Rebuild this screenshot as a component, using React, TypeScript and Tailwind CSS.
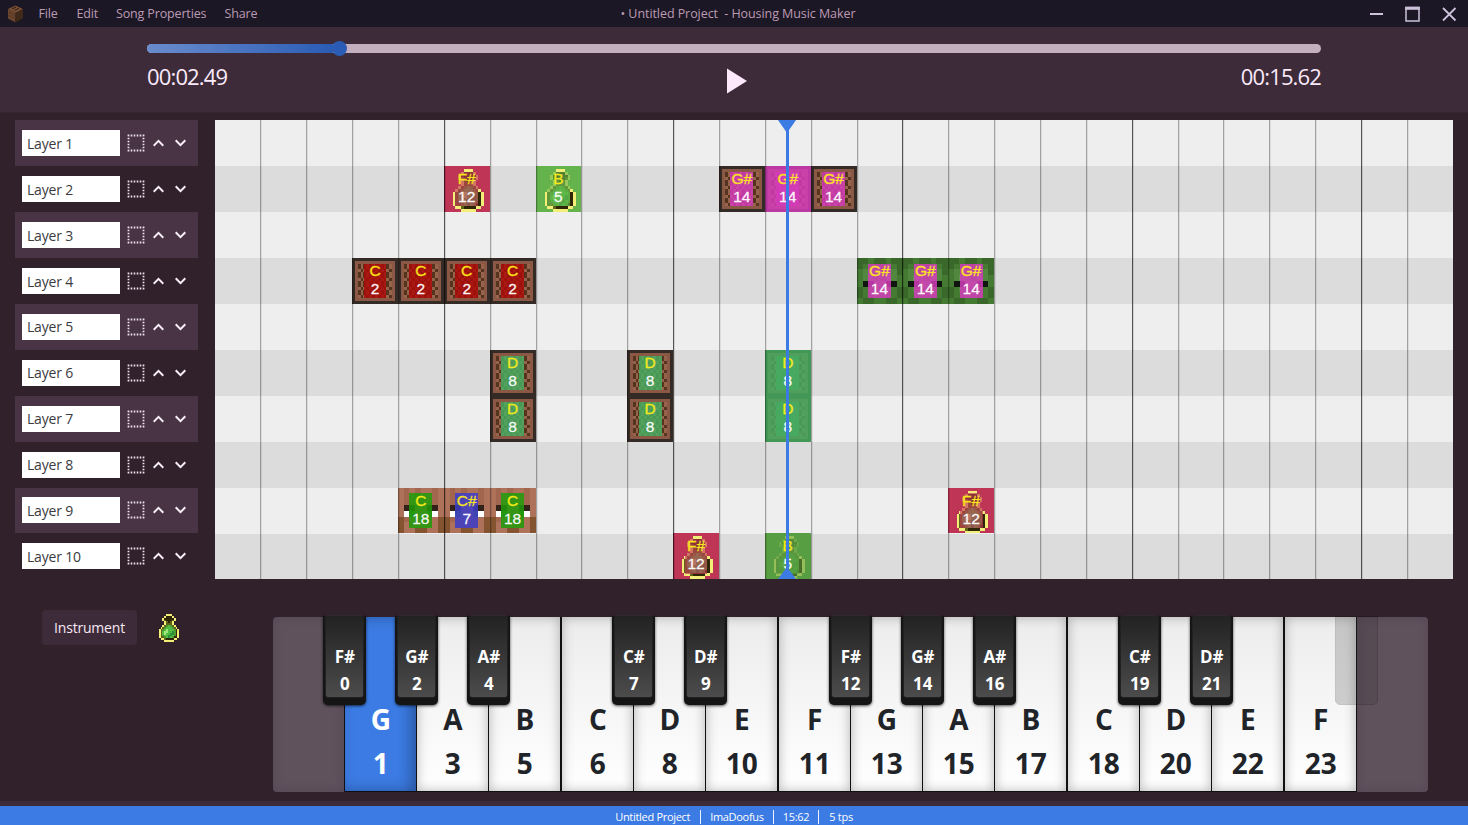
import React from 'react';

type Texture = 'noteblock' | 'zombie' | 'villager' | 'bottle';
type Note = { col: number; row: number; label: string; num: number; color: string; tex: Texture; playing?: boolean };

const NOTES: Note[] = [
  { col: 6, row: 2, label: 'F#', num: 12, color: '#bf3556', tex: 'bottle' },
  { col: 8, row: 2, label: 'B', num: 5, color: '#64b34c', tex: 'bottle' },
  { col: 12, row: 2, label: 'G#', num: 14, color: '#d43cba', tex: 'noteblock' },
  { col: 13, row: 2, label: 'G#', num: 14, color: '#d43cba', tex: 'noteblock', playing: true },
  { col: 14, row: 2, label: 'G#', num: 14, color: '#d43cba', tex: 'noteblock' },
  { col: 4, row: 4, label: 'C', num: 2, color: '#ac0a08', tex: 'noteblock' },
  { col: 5, row: 4, label: 'C', num: 2, color: '#ac0a08', tex: 'noteblock' },
  { col: 6, row: 4, label: 'C', num: 2, color: '#ac0a08', tex: 'noteblock' },
  { col: 7, row: 4, label: 'C', num: 2, color: '#ac0a08', tex: 'noteblock' },
  { col: 15, row: 4, label: 'G#', num: 14, color: '#d43cba', tex: 'zombie' },
  { col: 16, row: 4, label: 'G#', num: 14, color: '#d43cba', tex: 'zombie' },
  { col: 17, row: 4, label: 'G#', num: 14, color: '#d43cba', tex: 'zombie' },
  { col: 7, row: 6, label: 'D', num: 8, color: '#46ab60', tex: 'noteblock' },
  { col: 7, row: 7, label: 'D', num: 8, color: '#46ab60', tex: 'noteblock' },
  { col: 10, row: 6, label: 'D', num: 8, color: '#46ab60', tex: 'noteblock' },
  { col: 10, row: 7, label: 'D', num: 8, color: '#46ab60', tex: 'noteblock' },
  { col: 13, row: 6, label: 'D', num: 8, color: '#46ab60', tex: 'noteblock', playing: true },
  { col: 13, row: 7, label: 'D', num: 8, color: '#46ab60', tex: 'noteblock', playing: true },
  { col: 5, row: 9, label: 'C', num: 18, color: '#1e9c08', tex: 'villager' },
  { col: 6, row: 9, label: 'C#', num: 7, color: '#3c3cc8', tex: 'villager' },
  { col: 7, row: 9, label: 'C', num: 18, color: '#1e9c08', tex: 'villager' },
  { col: 17, row: 9, label: 'F#', num: 12, color: '#bf3556', tex: 'bottle' },
  { col: 11, row: 10, label: 'F#', num: 12, color: '#bf3556', tex: 'bottle' },
  { col: 13, row: 10, label: 'B', num: 5, color: '#579d42', tex: 'bottle', playing: true },
];

const BOTTLE = [
  '................',
  '.......YYY......',
  '......YkkkY.....',
  '.....YkkkkkY....',
  '.....YdkkkdY....',
  '......YdkdY.....',
  '......YdddY.....',
  '.....YdgGgdY....',
  '....YdgGGGgdY...',
  '...YdgGLGGGgkY..',
  '...YdGLLGGDgkY..',
  '...YdGLGGDDgkY..',
  '...YdgGGDDGgkY..',
  '...YddgGDGgkkY..',
  '....YYdkkkkYY...',
  '......YYYYY.....',
];
const VILLAGER = ['bababbab', 'bababbab', 'bababbab', 'bkkbbkkb', 'bwpbbpwb', 'cabddabc', 'cbddddbc', 'cbbccbbc'];
const ZOMBIE = ['aabaabaa', 'abbaabba', 'bccbbcca', 'bcdcbdcb', 'bkkddkkb', 'abccdcba', 'abbccbba', 'baabbaab'];

const BOTTLE_COLORS: Record<string, string> = { Y: '#f2ee78', d: '#5e6418', k: '#2e2606', g: '#4d9830', G: '#52bc44', L: '#a0e87c', D: '#2d8f38' };
const VILLAGER_COLORS: Record<string, string> = { a: '#a2664f', b: '#ae7159', c: '#84532f', d: '#a96a50', k: '#33221a', w: '#ffffff', p: '#3c7a2e' };
const ZOMBIE_COLORS: Record<string, string> = { a: '#39682a', b: '#447a32', c: '#528740', d: '#639352', k: '#111510' };

function PixelArt({ rows, colors }: { rows: string[]; colors: Record<string, string> }) {
  return (
    <svg className="block h-full w-full" viewBox={`0 0 ${rows.length} ${rows.length}`} preserveAspectRatio="none" shapeRendering="crispEdges">
      {rows.flatMap((r, y) => r.split('').map((c, x) => (colors[c] ? <rect key={`${x}-${y}`} x={x} y={y} width="1" height="1" fill={colors[c]} /> : null)))}
    </svg>
  );
}

function NoteBlock() {
  const cells: React.ReactNode[] = [];
  for (let x = 2; x < 14; x++) {
    for (let y = 2; y < 14; y++) {
      const dark = x % 2 ? y % 3 === 1 : y % 3 !== 1;
      cells.push(<rect key={`${x}-${y}`} x={x} y={y} width="1" height="1" fill={dark ? '#54331f' : '#97634a'} />);
    }
  }
  return (
    <svg className="block h-full w-full" viewBox="0 0 16 16" preserveAspectRatio="none" shapeRendering="crispEdges">
      <rect width="16" height="16" fill="#352b26" />
      <rect x="1" y="1" width="14" height="14" fill="#8a5844" />
      {cells}
    </svg>
  );
}

function TextureImage({ tex }: { tex: Texture }) {
  if (tex === 'noteblock') return <NoteBlock />;
  if (tex === 'bottle') return <PixelArt rows={BOTTLE} colors={BOTTLE_COLORS} />;
  if (tex === 'villager') return <PixelArt rows={VILLAGER} colors={VILLAGER_COLORS} />;
  return <PixelArt rows={ZOMBIE} colors={ZOMBIE_COLORS} />;
}

function NoteCell({ note }: { note: Note }) {
  const bottle = note.tex === 'bottle';
  return (
    <div className="relative overflow-hidden" style={{ gridColumn: note.col, gridRow: note.row, backgroundColor: bottle ? note.color : undefined }}>
      <TextureImage tex={note.tex} />
      {note.playing ? (
        <div className={bottle ? 'absolute inset-0 opacity-60' : 'absolute inset-0 opacity-85'} style={{ backgroundColor: note.color }} />
      ) : null}
      <div className={bottle ? 'absolute inset-x-1/4 inset-y-[12.5%] opacity-65' : 'absolute inset-x-1/4 inset-y-[12.5%] opacity-85'} style={{ backgroundColor: note.color }} />
      <div className="absolute inset-0 flex flex-col items-center pt-[4px] text-center font-['Liberation_Sans',sans-serif] text-[15.5px] leading-[18px] [-webkit-text-stroke:0.3px_currentColor]">
        <span className="text-[#ffee18]/90">{note.label}</span>
        <span className="text-white/95">{note.num}</span>
      </div>
    </div>
  );
}

function LayerRow({ n }: { n: number }) {
  return (
    <div className={n % 2 ? 'flex h-[45.9px] items-center bg-[#483445] pl-[7px]' : 'flex h-[45.9px] items-center pl-[7px]'}>
      <div className="flex h-[26px] w-[98px] items-center bg-white pl-[5px] text-[14px] tracking-[-0.2px] text-[#3b3b40]">Layer {n}</div>
      <svg className="ml-[7px] size-[18px]" viewBox="0 0 18 18">
        <rect x="1.5" y="1.5" width="15" height="15" fill="none" stroke="#efe2ee" strokeWidth="1.8" strokeDasharray="1.6 1.4" strokeDashoffset="0.8" />
      </svg>
      <svg className="ml-[7.5px] h-[8px] w-[11px]" viewBox="0 0 11 8" fill="none" stroke="#f8eef8" strokeWidth="2">
        <path d="M0.7 6.7 5.5 1.9 10.3 6.7" />
      </svg>
      <svg className="ml-[11px] h-[8px] w-[11px]" viewBox="0 0 11 8" fill="none" stroke="#f8eef8" strokeWidth="2">
        <path d="M0.7 1.3 5.5 6.1 10.3 1.3" />
      </svg>
    </div>
  );
}

const WHITE: { label?: string; num?: number; black?: [string, number] | 'ghost'; wide?: boolean }[] = [
  { black: ['F#', 0] },
  { label: 'G', num: 1, black: ['G#', 2] },
  { label: 'A', num: 3, black: ['A#', 4] },
  { label: 'B', num: 5, wide: true },
  { label: 'C', num: 6, black: ['C#', 7] },
  { label: 'D', num: 8, black: ['D#', 9] },
  { label: 'E', num: 10, wide: true },
  { label: 'F', num: 11, black: ['F#', 12] },
  { label: 'G', num: 13, black: ['G#', 14] },
  { label: 'A', num: 15, black: ['A#', 16] },
  { label: 'B', num: 17, wide: true },
  { label: 'C', num: 18, black: ['C#', 19] },
  { label: 'D', num: 20, black: ['D#', 21] },
  { label: 'E', num: 22, wide: true },
  { label: 'F', num: 23, black: 'ghost' },
  {},
];

function BlackKey({ k }: { k: [string, number] | 'ghost' }) {
  const ghost = k === 'ghost';
  return (
    <div
      className={
        ghost
          ? 'absolute -right-[22px] -top-px z-10 h-[89px] w-[43px] rounded-b-[5px] border border-black bg-[#303030] opacity-20'
          : 'absolute -right-[22px] -top-px z-10 h-[89px] w-[43px] rounded-b-[5px] bg-[#151515] px-[3px] pb-[8px] shadow-[0_1px_3px_rgba(0,0,0,0.7)]'
      }
    >
      {ghost ? null : (
        <div className="flex h-full flex-col items-center rounded-b-[2px] bg-linear-to-b from-[#222] to-[#4c4c4c] pt-[27px] text-[17px] leading-[27px] font-bold text-white shadow-[0_0_2px_#444]">
          <span>{k[0]}</span>
          <span>{k[1]}</span>
        </div>
      )}
    </div>
  );
}

function Piano() {
  return (
    <div className="flex h-[175px] w-[1155px]">
      {WHITE.map((w, i) => {
        const ghost = w.num === undefined;
        const face = ghost
          ? 'bg-[#60525d] shadow-[inset_0_0_10px_rgba(60,45,60,0.35)] ' + (i === 0 ? 'rounded-l-[4px]' : 'rounded-r-[4px]')
          : w.num === 1
            ? 'border-x border-b border-[#101010] bg-[#3b7be3] text-white shadow-[inset_-5px_0_14px_rgba(0,0,0,0.3)]'
            : 'border-b border-[#101010] bg-linear-to-b from-[#ececec] to-white text-[#202429] shadow-[inset_0_0_12px_rgba(0,0,0,0.28)] ' + (w.wide ? 'border-r-2' : 'border-r');
        return (
          <div key={i} className={'relative min-w-0 flex-1 ' + face}>
            {ghost ? null : (
              <div className="flex h-full flex-col items-center pt-[80px] text-[28px] leading-[44px] font-bold">
                <span>{w.label}</span>
                <span>{w.num}</span>
              </div>
            )}
            {w.black ? <BlackKey k={w.black} /> : null}
          </div>
        );
      })}
    </div>
  );
}

export default function App() {
  return (
    <div className="flex h-[825px] w-[1468px] flex-col overflow-hidden bg-[#30212b] font-['Open_Sans','Noto_Sans',sans-serif]">
      <header className="relative flex h-[27px] shrink-0 items-center bg-[#1b1724] text-[12.5px] tracking-[-0.15px] text-[#bd9ab4]">
        <svg className="ml-[7px] h-[18px] w-[17px]" viewBox="0 0 17 18">
          <path d="M8.5 0.5 16 4 8.5 8 1 4Z" fill="#7c5137" />
          <path d="M1 4 8.5 8V17.5L1 13.5Z" fill="#6b452c" />
          <path d="M16 4 8.5 8V17.5L16 13.5Z" fill="#3e2818" />
          <path d="M5 4 9 2M7.5 5.5 12 3.2" stroke="#372317" strokeWidth="1.2" />
          <path d="M2 7.5 8 10.7M2 10.5 8 13.7M10 10 15 7.4M10 13 15 10.5" stroke="#4c301e" strokeDasharray="2 1.2" />
        </svg>
        <nav className="ml-[14.5px] flex pt-[2px] whitespace-nowrap">
          <span className="w-[38px]">File</span>
          <span className="w-[39.5px]">Edit</span>
          <span className="w-[108.5px]">Song Properties</span>
          <span>Share</span>
        </nav>
        <div className="absolute inset-x-0 pt-[2px] text-center tracking-[-0.07px] whitespace-pre">
          <span className="pl-[8px]">• Untitled Project  - Housing Music Maker</span>
        </div>
        <div className="ml-auto flex items-center pr-[11px]">
          <svg className="h-[16px] w-[88px]" viewBox="0 0 88 16" fill="none" stroke="#ccc2dc">
            <path d="M1 8H14" strokeWidth="2" />
            <path d="M37 1.5H50V15H37Z" strokeWidth="1.5" />
            <path d="M36.2 2.3H50.8" strokeWidth="3" />
            <path d="M74 2 86.5 14.5M86.5 2 74 14.5" strokeWidth="1.8" />
          </svg>
        </div>
      </header>

      <section className="h-[85px] shrink-0 bg-[#3d2b39] px-[147px] pt-[17px]">
        <div className="flex h-[9px] items-center rounded-full bg-[#c3afc0]">
          <div className="h-[9px] w-[186px] rounded-l-full bg-linear-to-r from-[#6a8ccc] to-[#2a5cb5]" />
          <div className="-ml-px size-[15px] rounded-full bg-[#2a5cb5]" />
        </div>
        <div className="mt-[7px] grid h-[32px] grid-cols-3 items-start text-[22px] leading-[32px] tracking-[-0.85px] text-[#fbeafa]">
          <span>00:02.49</span>
          <svg className="mt-[8px] ml-[188.5px] h-[26px] w-[20px]" viewBox="0 0 20 26">
            <path d="M0 0.5 20 13 0 25.5Z" fill="#fce8fa" />
          </svg>
          <span className="text-right">00:15.62</span>
        </div>
      </section>

      <main className="flex h-[467.5px] shrink-0 border-t border-[#38242d] pt-[7.4px]">
        <div className="w-[214.5px] shrink-0 pr-[16.5px] pl-[15px]">
          {Array.from({ length: 10 }, (_, i) => (
            <LayerRow key={i} n={i + 1} />
          ))}
        </div>
        <div className="relative h-[459px] w-[1238.2px]">
          <div className="flex h-full flex-col">
            {Array.from({ length: 10 }, (_, i) => (
              <div key={i} className={i % 2 ? 'flex-1 bg-[#dcdcdc]' : 'flex-1 bg-[#eeeeee]'} />
            ))}
          </div>
          <div className="absolute inset-0 grid grid-cols-[repeat(27,minmax(0,1fr))] grid-rows-[repeat(10,minmax(0,1fr))]">
            {NOTES.map((n) => (
              <NoteCell key={`${n.col}-${n.row}`} note={n} />
            ))}
          </div>
          <div className="absolute inset-0 grid grid-cols-[repeat(27,minmax(0,1fr))]">
            {Array.from({ length: 27 }, (_, i) => (
              <div
                key={i}
                className={
                  i === 0
                    ? ''
                    : i % 5 === 0
                      ? 'border-l border-black/65 shadow-[inset_1px_0_0_rgba(0,0,0,0.12)]'
                      : 'border-l border-black/32 shadow-[inset_1px_0_0_rgba(0,0,0,0.08)]'
                }
              />
            ))}
          </div>
          <div className="absolute inset-y-0 left-[563.6px] flex w-[18px] flex-col items-center">
            <svg className="h-[13px] w-[18px]" viewBox="0 0 18 13">
              <path d="M0 0H18L9 13Z" fill="#3b7be3" />
            </svg>
            <div className="-my-[3px] w-[3px] flex-1 bg-[#3b7be3]" />
            <svg className="h-[12px] w-[18px]" viewBox="0 0 18 12">
              <path d="M0 12H18L9 0Z" fill="#3b7be3" />
            </svg>
          </div>
        </div>
      </main>

      <section className="flex h-[221.5px] shrink-0">
        <div className="flex w-[273.3px] shrink-0 items-start pt-[30.5px] pl-[42px]">
          <div className="flex h-[35px] w-[95px] items-center justify-center rounded-[4px] bg-[#3d2b39] text-[14px] tracking-[-0.2px] text-[#f5e8f4]">Instrument</div>
          <div className="mt-[2px] ml-[16px] size-[30px]">
            <TextureImage tex="bottle" />
          </div>
        </div>
        <div className="pt-[37.5px]">
          <Piano />
        </div>
      </section>
      <div className="h-[5px] shrink-0 bg-[#3d2b39]" />
      <footer className="flex flex-1 items-center justify-center bg-[#3b7be3] pt-[3px] text-[11px] tracking-[-0.3px] text-white">
        <span className="pr-[10px]">Untitled Project</span>
        <span className="h-[14px] border-l border-white/90" />
        <span className="px-[9px]">ImaDoofus</span>
        <span className="h-[14px] border-l border-white/90" />
        <span className="px-[9px]">15:62</span>
        <span className="h-[14px] border-l border-white/90" />
        <span className="pl-[10px]">5 tps</span>
      </footer>
    </div>
  );
}
